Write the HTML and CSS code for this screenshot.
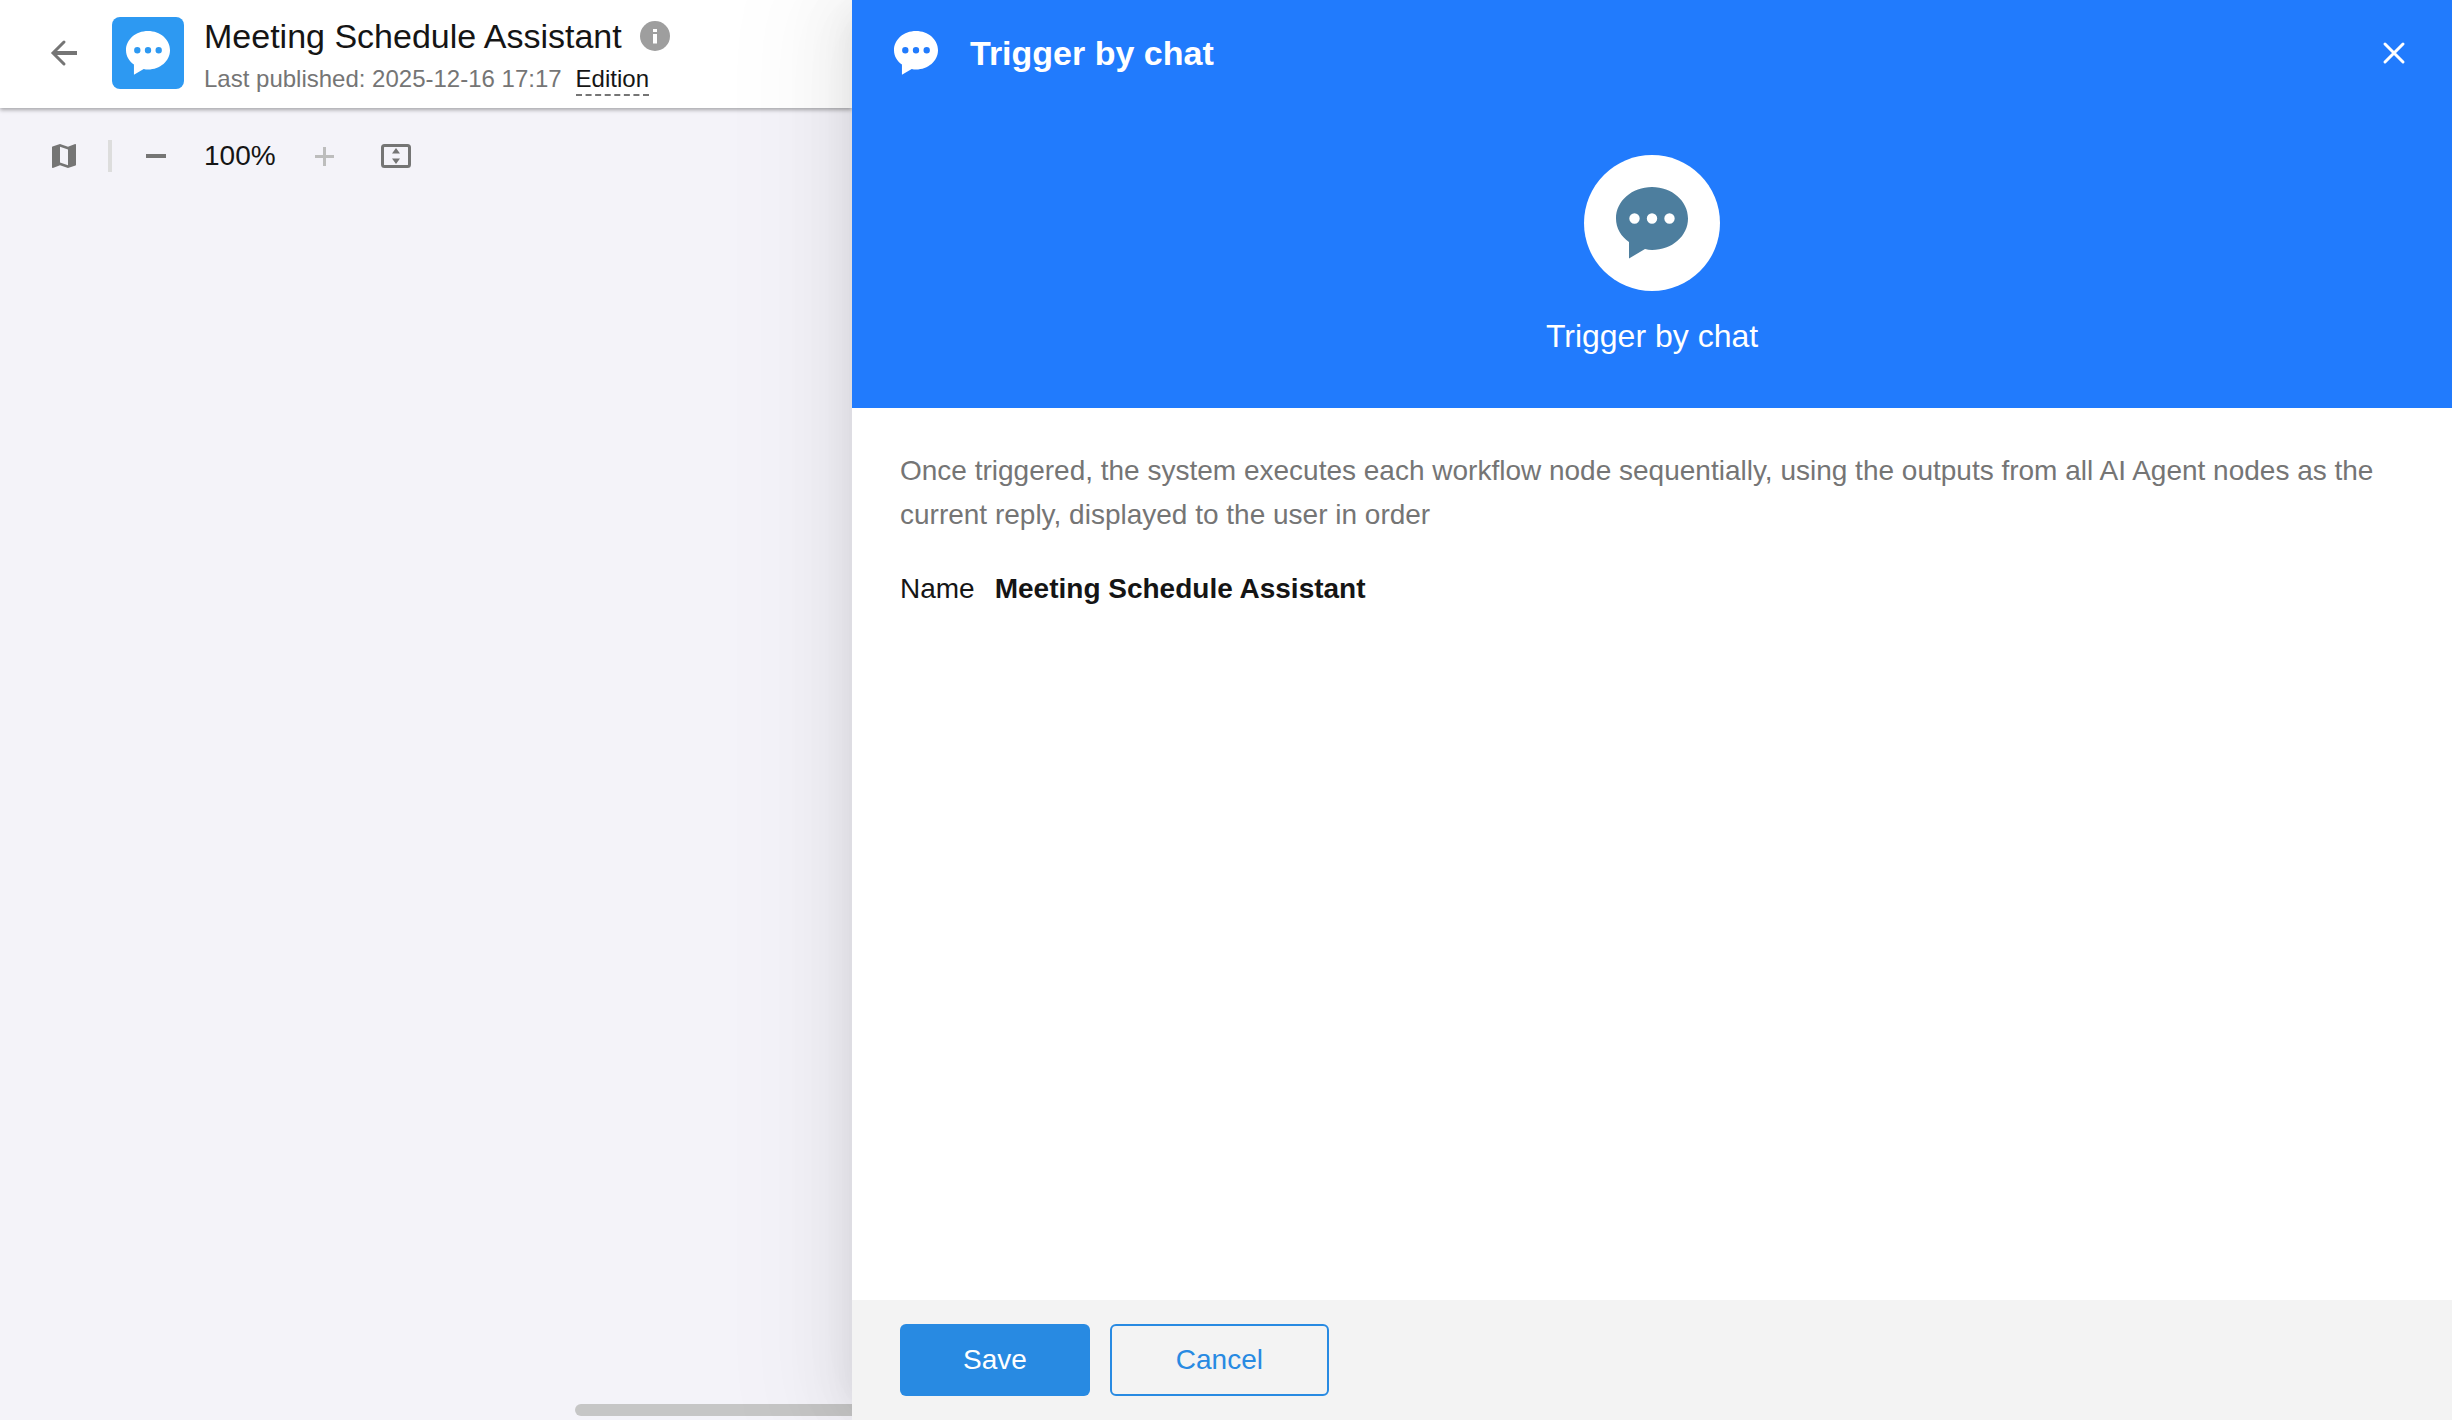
FILE: index.html
```html
<!DOCTYPE html>
<html lang="en">

<head>
    <meta charset="UTF-8">
    <meta name="viewport" content="width=device-width, initial-scale=1.0">
    <title>Meeting Schedule Assistant</title>
    <link rel="stylesheet" href="styles.css">
</head>

<body>
    <!-- shared chat bubble icon -->
    <svg class="sprite" aria-hidden="true">
        <symbol id="chat" viewBox="0 0 72 72">
            <path fill-rule="evenodd" d="M36 0C56 0 72 14 72 31.500C72 49 56 63 36 63Q32.500 63 29 62L13 71.500V55C5 49.500 0 41 0 31.500C0 14 16 0 36 0ZM18.500 26.300a5.200 5.200 0 1 0 0 10.400a5.200 5.200 0 1 0 0-10.400ZM36 26.300a5.200 5.200 0 1 0 0 10.400a5.200 5.200 0 1 0 0-10.400ZM53.500 26.300a5.200 5.200 0 1 0 0 10.400a5.200 5.200 0 1 0 0-10.400Z" />
        </symbol>
    </svg>

    <div class="page">
        <main class="workspace">
            <header class="topbar">
                <button class="icon-btn back" aria-label="Back">
                    <svg width="28" height="28" viewBox="0 0 28 28" fill="none" stroke="#757575" stroke-width="3">
                        <path d="M27 14H4" stroke-width="4" />
                        <path d="M14 3L3 14L14 25" stroke-linecap="round" />
                    </svg>
                </button>
                <div class="app-icon"><svg width="44" height="44"><use href="#chat" /></svg></div>
                <div class="app-info">
                    <div class="title-row">
                        <h1>Meeting Schedule Assistant</h1>
                        <svg width="30" height="30" viewBox="0 0 30 30">
                            <circle cx="15" cy="15" r="15" fill="#9e9e9e" />
                            <path fill="#fff" d="M13 8h4v3h-4zM13 13h4v9.500h-4z" />
                        </svg>
                    </div>
                    <div class="published">
                        <span>Last published: 2025-12-16 17:17</span>
                        <a class="edition" href="#">Edition</a>
                    </div>
                </div>
            </header>

            <div class="toolbar">
                <button class="icon-btn" aria-label="Map">
                    <svg width="24" height="24" viewBox="3 3 18 18" fill="#757575">
                        <path d="M20.500 3l-.16.03L15 5.100 9 3 3.360 4.900c-.21.07-.36.25-.36.48V20.500c0 .28.22.5.5.5l.16-.03L9 18.900l6 2.100 5.640-1.900c.21-.07.36-.25.36-.48V3.500c0-.28-.22-.5-.5-.5zM15 19l-6-2.110V5l6 2.110V19z" />
                    </svg>
                </button>
                <span class="divider"></span>
                <button class="icon-btn" aria-label="Zoom out">
                    <svg width="20" height="20" viewBox="0 0 20 20"><path fill="#757575" d="M0 8h20v4H0z" /></svg>
                </button>
                <span class="zoom-value">100%</span>
                <button class="icon-btn zoom-in" aria-label="Zoom in">
                    <svg width="20" height="20" viewBox="0 0 20 20"><path fill="#bdbdbd" d="M1 9h8V1h3v8h8v3h-8v8H9v-8H1z" /></svg>
                </button>
                <button class="icon-btn" aria-label="Fit to screen">
                    <svg width="30" height="24" viewBox="0 0 30 24">
                        <rect x="1.500" y="1.500" width="27" height="21" rx="2" fill="none" stroke="#757575" stroke-width="3" />
                        <path fill="#757575" d="M15 4l4 5.500h-8zM15 20l-4-5.500h8z" />
                    </svg>
                </button>
            </div>

            <div class="canvas"></div>
            <div class="scrollbar"></div>
        </main>

        <aside class="drawer">
            <div class="drawer-head">
                <div class="drawer-bar">
                    <svg width="44" height="44"><use href="#chat" /></svg>
                    <h2>Trigger by chat</h2>
                    <button class="icon-btn" aria-label="Close">
                        <svg width="24" height="24" viewBox="0 0 24 24" stroke="#fff" stroke-width="3" stroke-linecap="round">
                            <path d="M3 3L21 21M21 3L3 21" />
                        </svg>
                    </button>
                </div>
                <div class="hero">
                    <div class="hero-icon"><svg width="72" height="72"><use href="#chat" /></svg></div>
                    <p>Trigger by chat</p>
                </div>
            </div>
            <div class="drawer-body">
                <p class="desc">Once triggered, the system executes each workflow node sequentially, using the outputs from all AI Agent nodes as the current reply, displayed to the user in order</p>
                <div class="field">
                    <span>Name</span>
                    <strong>Meeting Schedule Assistant</strong>
                </div>
            </div>
            <footer class="drawer-foot">
                <button class="btn save">Save</button>
                <button class="btn cancel">Cancel</button>
            </footer>
        </aside>
    </div>
</body>

</html>
```
FILE: styles.css
```css
* {
    margin: 0;
    padding: 0;
    box-sizing: border-box;
}

body {
    font-family: "Liberation Sans", Arial, sans-serif;
    font-size: 28px;
    color: #151515;
}

svg {
    display: block;
}

.sprite {
    display: none;
}

.page {
    display: grid;
    grid-template-columns: 213fr 400fr;
    height: 100vh;
    overflow: hidden;
}

.icon-btn {
    border: none;
    background: none;
    cursor: pointer;
}

/* left side */
.workspace {
    display: flex;
    flex-direction: column;
    min-width: 0;
    background-color: #f4f3f9;
}

.topbar {
    display: flex;
    align-items: center;
    height: 108px;
    padding: 0 50px 2px;
    background-color: #fff;
    box-shadow: 0 2px 4px rgba(0, 0, 0, .32);
}

.back {
    margin-right: 34px;
}

.app-icon {
    display: flex;
    align-items: center;
    justify-content: center;
    width: 72px;
    height: 72px;
    margin-right: 20px;
    border-radius: 8px;
    background-color: #2d99f2;
    fill: #fff;
}

.app-info {
    padding-top: 4px;
}

.title-row {
    display: flex;
    align-items: center;
    gap: 18px;
}

h1 {
    font-size: 34px;
    font-weight: 400;
    line-height: 44px;
}

.published {
    display: flex;
    gap: 14px;
    margin-top: 6px;
    color: #757575;
    font-size: 24px;
    line-height: 30px;
}

.edition {
    color: #151515;
    text-decoration: none;
    border-bottom: 2px dashed #757575;
}

.toolbar {
    display: flex;
    align-items: center;
    height: 96px;
    padding: 0 52px;
}

.divider {
    width: 4px;
    height: 32px;
    margin: 0 34px 0 32px;
    background-color: #ddd;
}

.zoom-value {
    margin: 0 38px;
}

.zoom-in {
    margin-right: 47px;
}

.canvas {
    flex: 1;
}

.scrollbar {
    align-self: flex-end;
    width: 277px;
    height: 12px;
    margin-bottom: 4px;
    border-radius: 6px 0 0 6px;
    background-color: #c6c6c6;
}

/* right side panel */
.drawer {
    display: flex;
    flex-direction: column;
    z-index: 1;
    min-width: 0;
    background-color: #fff;
    box-shadow: -12px 0 32px -16px rgba(0, 0, 0, .08), -18px 0 56px rgba(0, 0, 0, .05), -24px 0 96px 32px rgba(0, 0, 0, .03);
}

.drawer-head {
    height: 408px;
    background-color: #217bfd;
    color: #fff;
}

.drawer-bar {
    display: flex;
    align-items: center;
    height: 108px;
    padding: 0 46px 2px 42px;
    fill: #fff;
}

h2 {
    flex: 1;
    margin-left: 32px;
    font-size: 34px;
}

.hero {
    display: flex;
    flex-direction: column;
    align-items: center;
    gap: 24px;
    padding: 47px 48px 0;
    font-size: 32px;
    line-height: 42px;
}

.hero-icon {
    display: flex;
    align-items: center;
    justify-content: center;
    width: 136px;
    height: 136px;
    border-radius: 50%;
    background-color: #fff;
    fill: #4d7e9e;
}

.drawer-body {
    flex: 1;
    padding: 41px 48px;
}

.desc {
    margin-bottom: 30px;
    color: #757575;
    line-height: 44px;
}

.field {
    display: flex;
    gap: 20px;
    line-height: 44px;
}

.drawer-foot {
    display: flex;
    align-items: center;
    gap: 20px;
    height: 120px;
    padding: 0 48px;
    background-color: #f3f3f3;
}

.btn {
    height: 72px;
    border-radius: 6px;
    font-family: inherit;
    font-size: 28px;
    cursor: pointer;
}

.save {
    padding: 0 63px;
    border: none;
    background-color: #288ae2;
    color: #fff;
}

.cancel {
    padding: 0 64px;
    border: 2px solid #288ae2;
    background-color: transparent;
    color: #288ae2;
}
```
